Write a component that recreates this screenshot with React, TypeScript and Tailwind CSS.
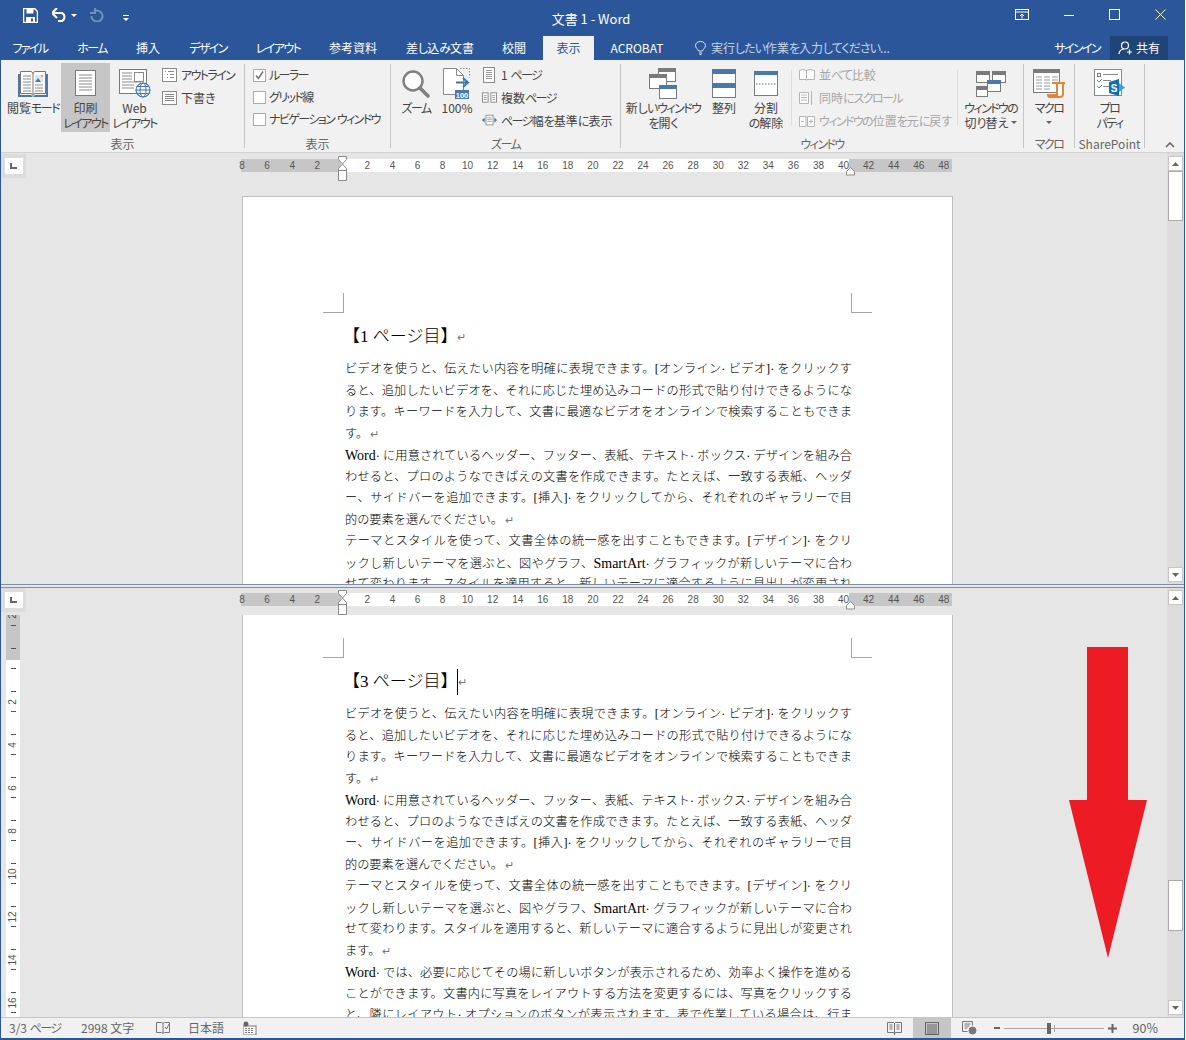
import type { ReactNode } from 'react';

const CHROME_FONT = "font-['Noto_Sans_CJK_JP',sans-serif] [font-feature-settings:'palt'] text-[12px]";
const DOC_FONT = "font-['Liberation_Serif','Noto_Sans_CJK_JP',serif]";

const tabs = [
  { label: 'ファイル', w: 'w-[58px]' },
  { label: 'ホーム', w: 'w-[66px]' },
  { label: '挿入', w: 'w-[46px]' },
  { label: 'デザイン', w: 'w-[74px]' },
  { label: 'レイアウト', w: 'w-[66px]' },
  { label: '参考資料', w: 'w-[84px]' },
  { label: '差し込み文書', w: 'w-[90px]' },
  { label: '校閲', w: 'w-[58px]' },
];

const line = (text: string, mark = false) => ({ text, mark });

const paragraphs = [
  line('ビデオを使うと、伝えたい内容を明確に表現できます。[オンライン· ビデオ]· をクリックす'),
  line('ると、追加したいビデオを、それに応じた埋め込みコードの形式で貼り付けできるようにな'),
  line('ります。キーワードを入力して、文書に最適なビデオをオンラインで検索することもできま'),
  line('す。', true),
  line('Word· に用意されているヘッダー、フッター、表紙、テキスト· ボックス· デザインを組み合'),
  line('わせると、プロのようなできばえの文書を作成できます。たとえば、一致する表紙、ヘッダ'),
  line('ー、サイドバーを追加できます。[挿入]· をクリックしてから、それぞれのギャラリーで目'),
  line('的の要素を選んでください。', true),
  line('テーマとスタイルを使って、文書全体の統一感を出すこともできます。[デザイン]· をクリ'),
  line('ックし新しいテーマを選ぶと、図やグラフ、SmartArt· グラフィックが新しいテーマに合わ'),
  line('せて変わります。スタイルを適用すると、新しいテーマに適合するように見出しが変更され'),
  line('ます。', true),
  line('Word· では、必要に応じてその場に新しいボタンが表示されるため、効率よく操作を進める'),
  line('ことができます。文書内に写真をレイアウトする方法を変更するには、写真をクリックする'),
  line('と、隣にレイアウト· オプションのボタンが表示されます。表で作業している場合は、行ま'),
];

const rulerNumbers = [8, 6, 4, 2, 0, 2, 4, 6, 8, 10, 12, 14, 16, 18, 20, 22, 24, 26, 28, 30, 32, 34, 36, 38, 40, 42, 44, 46, 48];
const verticalNumbers = [2, 0, 2, 4, 6, 8, 10, 12, 14, 16];

// Meiryo UI has narrow kana, so squeeze kana runs and leave kanji at full width
function Jp({ children }: { children: string }) {
  const parts = children.split(/([ァ-ヶー]+|[ぁ-ん]+)/);
  return (
    <>
      {parts.map((p, i) => {
        if (!p) return null;
        if (/^[ァ-ヶー]/.test(p)) return <span key={i} className="tracking-[-1.6px]">{p}</span>;
        if (/^[ぁ-ん]/.test(p)) return <span key={i} className="tracking-[-1px]">{p}</span>;
        return <span key={i}>{p}</span>;
      })}
    </>
  );
}

// Latin words in the body text run larger than the Japanese around them
function DocText({ children }: { children: string }) {
  return (
    <>
      {children.split(/([A-Za-z]+)/).map((p, i) =>
        /^[A-Za-z]/.test(p) ? <span key={i} className="text-[14px]">{p}</span> : <span key={i}>{p}</span>
      )}
    </>
  );
}

function BookIcon() {
  return (
    <svg width="32" height="28" viewBox="0 0 32 28" fill="none">
      <path d="M1 4h2v21h11l2 2 2-2h11V4h2v23H1z" fill="#4a78ad" />
      <path d="M3.5 1.5h11l1.5 2 1.5-2h11v22h-11l-1.5 2-1.5-2h-11z" fill="#fff" stroke="#777" />
      <path d="M16 3v22" stroke="#777" />
      <path d="M6 6h8M6 9h8M6 12h8M6 15h8M6 18h8M6 21h8M18 15h8M18 18h8M18 21h8" stroke="#8a8a8a" />
      <rect x="18" y="5" width="8" height="7" fill="#dfe7f1" />
      <path d="M18 12l3-4 3 4z" fill="#4a78ad" />
      <rect x="24" y="5" width="2" height="2" fill="#e8a05a" />
    </svg>
  );
}

function PageIcon() {
  return (
    <svg width="22" height="27" viewBox="0 0 22 27" fill="none">
      <rect x="0.5" y="0.5" width="20" height="25" fill="#fff" stroke="#7a7a7a" />
      <path d="M4 5h13M4 8h13M4 11h13M4 14h13M4 17h13M4 20h13" stroke="#8a8a8a" />
    </svg>
  );
}

function WebIcon() {
  return (
    <svg width="32" height="29" viewBox="0 0 32 29" fill="none">
      <rect x="0.5" y="0.5" width="27" height="24" fill="#fff" stroke="#7a7a7a" />
      <rect x="15.5" y="3.5" width="9" height="9" stroke="#8a8a8a" />
      <path d="M3 4h10M3 7h10M3 10h10M3 13h19M3 16h12M3 19h12" stroke="#8a8a8a" />
      <circle cx="24" cy="21" r="7" fill="#fff" stroke="#3f75ae" strokeWidth="1.2" />
      <ellipse cx="24" cy="21" rx="3" ry="7" stroke="#3f75ae" />
      <path d="M17 21h14M18 17.5h12M18 24.5h12" stroke="#3f75ae" />
    </svg>
  );
}

function OutlineIcon() {
  return (
    <svg width="15" height="14" viewBox="0 0 15 14" fill="none">
      <rect x="0.5" y="0.5" width="14" height="13" fill="#fff" stroke="#8a8a8a" />
      <path d="M3 3.5h1M6 3.5h6M5 6.5h1M8 6.5h4M5 9.5h1M8 9.5h4" stroke="#8a8a8a" />
    </svg>
  );
}

function DraftIcon() {
  return (
    <svg width="15" height="14" viewBox="0 0 15 14" fill="none">
      <rect x="0.5" y="0.5" width="14" height="13" fill="#fff" stroke="#8a8a8a" />
      <path d="M3 3.5h9M3 5.5h9M3 7.5h9M3 9.5h9" stroke="#8a8a8a" />
    </svg>
  );
}

function CheckBox({ checked }: { checked?: boolean }) {
  return (
    <span className="flex h-[13px] w-[13px] items-center justify-center border border-[#ababab] bg-white">
      {checked && (
        <svg width="11" height="11" viewBox="0 0 11 11" fill="none">
          <path d="M2 5.5l2.5 3L9 1.5" stroke="#777" strokeWidth="1.6" />
        </svg>
      )}
    </span>
  );
}

function ZoomIcon() {
  return (
    <svg width="30" height="30" viewBox="0 0 30 30" fill="none">
      <circle cx="12" cy="12" r="9.5" fill="#fff" stroke="#7f7f7f" strokeWidth="2.4" />
      <path d="M19 19l8 8" stroke="#7f7f7f" strokeWidth="3.6" strokeLinecap="round" />
    </svg>
  );
}

function HundredIcon() {
  return (
    <svg width="28" height="32" viewBox="0 0 28 32" fill="none">
      <path d="M.5.5h13l7 7v19H.5z" fill="#fff" stroke="#8a8a8a" />
      <path d="M13.5.5v7h7" stroke="#8a8a8a" />
      <path d="M17 .5h9.5v9" stroke="#8a8a8a" strokeDasharray="1.5 1.5" />
      <path d="M13 14.5h11M20 10l5 4.5-5 4.5" stroke="#3f75ae" strokeWidth="2" />
      <rect x="12" y="22" width="14" height="9" fill="#4a78ad" />
      <text x="19" y="29.5" textAnchor="middle" fontSize="7.5" fontWeight="700" fill="#fff" fontFamily="Liberation Sans">100</text>
    </svg>
  );
}

function OnePageIcon() {
  return (
    <svg width="13" height="16" viewBox="0 0 13 16" fill="none">
      <rect x="0.5" y="0.5" width="11" height="15" fill="#fff" stroke="#8a8a8a" />
      <path d="M3 3.5h6M3 5.5h6M3 7.5h6M3 9.5h6M3 11.5h6" stroke="#9a9a9a" />
    </svg>
  );
}

function MultiPageIcon() {
  return (
    <svg width="16" height="11" viewBox="0 0 16 11" fill="none">
      <rect x="0.5" y="0.5" width="6" height="10" fill="#fff" stroke="#8a8a8a" />
      <rect x="9.5" y="0.5" width="6" height="10" fill="#fff" stroke="#8a8a8a" />
      <path d="M2 3.5h3M2 5.5h3M2 7.5h3M11 3.5h3M11 5.5h3M11 7.5h3" stroke="#9a9a9a" />
    </svg>
  );
}

function PageWidthIcon() {
  return (
    <svg width="17" height="13" viewBox="0 0 17 13" fill="none">
      <rect x="4.5" y="0.5" width="8" height="11" fill="#fff" stroke="#8a8a8a" />
      <path d="M6 3.5h5M6 5.5h5M6 7.5h5" stroke="#9a9a9a" />
      <path d="M0 6l3-3v6zM17 6l-3-3v6z" fill="#3f75ae" />
    </svg>
  );
}

function WinBox({ x, y, w, h, bar = '#7a7a7a' }: { x: number; y: number; w: number; h: number; bar?: string }) {
  return (
    <g>
      <rect x={x + 0.5} y={y + 0.5} width={w} height={h} fill="#fff" stroke="#7a7a7a" />
      <rect x={x} y={y} width={w + 1} height={4} fill={bar} />
    </g>
  );
}

function NewWindowIcon() {
  return (
    <svg width="28" height="31" viewBox="0 0 28 31" fill="none">
      <WinBox x={9} y={0} w={17} h={13} />
      <WinBox x={0} y={6} w={17} h={14} />
      <WinBox x={10} y={17} w={17} h={13} bar="#4a78ad" />
    </svg>
  );
}

function ArrangeIcon() {
  return (
    <svg width="24" height="29" viewBox="0 0 24 29" fill="none">
      <rect x="0.5" y="0.5" width="23" height="28" fill="#fff" stroke="#7a7a7a" />
      <rect x="0" y="0" width="24" height="5" fill="#4a78ad" />
      <rect x="0" y="14" width="24" height="5" fill="#4a78ad" />
    </svg>
  );
}

function SplitIcon() {
  return (
    <svg width="24" height="25" viewBox="0 0 24 25" fill="none">
      <rect x="0.5" y="0.5" width="23" height="24" fill="#fff" stroke="#7a7a7a" />
      <rect x="0" y="0" width="24" height="4" fill="#4a78ad" />
      <path d="M2 13h20" stroke="#4a78ad" strokeDasharray="1.5 1.5" />
    </svg>
  );
}

function CompareIcon({ variant }: { variant: number }) {
  return (
    <svg width="16" height="14" viewBox="0 0 16 14" fill="none" stroke="#b5b5b5">
      {variant === 0 && <path d="M.5 2.5l3-1 4 1 4-1 4 1v9h-7.500l-.5 1-.5-1H.5zM7.500 2.500v9" fill="#fff" />}
      {variant === 1 && (
        <>
          <path d="M.5 1.500h9v11h-9z" fill="#fff" />
          <path d="M2 4h6M2 6.500h6M2 9h6M12.500 0v14" />
        </>
      )}
      {variant === 2 && (
        <>
          <path d="M.5 2.500h6.500v10H.5zM8.500 2.500H15.500v10H8.500z" fill="#fff" />
          <path d="M2 7.500h3M10 7.500h4M12 5.500v4" />
        </>
      )}
    </svg>
  );
}

function SwitchIcon() {
  return (
    <svg width="30" height="26" viewBox="0 0 30 26" fill="none">
      <WinBox x={0} y={0} w={13} h={11} />
      <WinBox x={16} y={0} w={13} h={11} />
      <WinBox x={0} y={15} w={11} h={10} />
      <WinBox x={11} y={9} w={13} h={11} bar="#4a78ad" />
    </svg>
  );
}

function MacroIcon() {
  return (
    <svg width="32" height="29" viewBox="0 0 32 29" fill="none">
      <rect x="0.5" y="0.5" width="26" height="23" fill="#fff" stroke="#7a7a7a" />
      <rect x="0" y="0" width="27" height="4" fill="#7a7a7a" />
      <path d="M3 8h6M11 8h6M19 8h6M3 11h6M11 11h6M19 11h6M3 14h6M11 14h6M3 17h6M11 17h6M3 20h6M11 20h6" stroke="#9a9a9a" />
      <path d="M19 14h13l-2 1v10c0 2-1 3-3 3H17c-1.500 0-2-1-2-2h9V16c0-1 .5-2 1-2z" fill="#fff" stroke="#e0883a" strokeWidth="2" />
    </svg>
  );
}

function PropertyIcon() {
  return (
    <svg width="31" height="29" viewBox="0 0 31 29" fill="none">
      <rect x="0.5" y="0.5" width="27" height="26" fill="#fff" stroke="#8a8a8a" />
      <rect x="3.500" y="4.500" width="3" height="3" stroke="#777" />
      <path d="M9 5.500h15M9 11.500h8M9 17.500h8" stroke="#8a8a8a" />
      <path d="M3 11l2 2 3-3M3 17l2 2 3-3" stroke="#5c7fa8" />
      <path d="M15 13l10-3v17l-10-3z" fill="#0f6fb5" />
      <path d="M25 14l6 4.500-6 4.500z" fill="#38a3dc" />
      <text x="20" y="23" textAnchor="middle" fontSize="10" fontWeight="700" fill="#fff" fontFamily="Liberation Sans">S</text>
    </svg>
  );
}

function Caret({ className = '' }: { className?: string }) {
  return (
    <svg className={className} width="6" height="3" viewBox="0 0 6 3">
      <path d="M0 0h6L3 3z" fill="#666" />
    </svg>
  );
}

function BigButton({ icon, lines, width, active, caret }: { icon: ReactNode; lines: string[]; width: string; active?: boolean; caret?: 'inline' | 'below' }) {
  return (
    <div className={`flex h-[69px] flex-col items-center text-center leading-[15px] text-[#444] ${width} ${active ? 'bg-[#c6c6c6]' : ''}`}>
      <div className="flex h-[37px] shrink-0 items-center justify-center pt-[4px]">{icon}</div>
      {lines.map((l, i) => (
        <div key={l} className="flex items-center whitespace-nowrap">
          <Jp>{l}</Jp>
          {caret === 'inline' && i === lines.length - 1 && <Caret className="ml-[4px]" />}
        </div>
      ))}
      {caret === 'below' && <Caret className="mt-[6px]" />}
    </div>
  );
}

function SmallItem({ icon, label, disabled, iconWidth = 'w-[15px]' }: { icon: ReactNode; label: string; disabled?: boolean; iconWidth?: string }) {
  return (
    <div className={`flex h-[23px] items-center gap-[4px] whitespace-nowrap ${disabled ? 'text-[#a6a6a6]' : 'text-[#444]'}`}>
      <span className={`flex justify-center ${iconWidth}`}>{icon}</span>
      <span><Jp>{label}</Jp></span>
    </div>
  );
}

function CheckItem({ label, checked }: { label: string; checked?: boolean }) {
  return (
    <div className="flex h-[22px] items-center gap-[3px] whitespace-nowrap">
      <CheckBox checked={checked} />
      <span><Jp>{label}</Jp></span>
    </div>
  );
}

function Group({ width, label, children }: { width: string; label: string; children: ReactNode }) {
  return (
    <div className={`mt-[4px] flex h-[84px] shrink-0 flex-col border-r border-[#c6c6c6] ${width}`}>
      <div className="mt-[-1px] flex h-[73px] shrink-0">{children}</div>
      <div className="h-4 whitespace-nowrap text-center leading-4 text-[#666]"><Jp>{label}</Jp></div>
    </div>
  );
}

function Ribbon() {
  return (
    <div className={`flex h-[93px] shrink-0 border-b border-[#d2d2d2] bg-[#f1f1f1] ${CHROME_FONT}`}>
      <Group width="w-[244px]" label="表示">
        <div className="flex pl-[4px]">
          <BigButton width="w-[56px]" icon={<BookIcon />} lines={['閲覧モード']} />
          <BigButton width="w-[49px]" active icon={<PageIcon />} lines={['印刷', 'レイアウト']} />
          <BigButton width="w-[49px]" icon={<WebIcon />} lines={['Web', 'レイアウト']} />
          <div className="ml-[3px] flex flex-col">
            <SmallItem icon={<OutlineIcon />} label="アウトライン" />
            <SmallItem icon={<DraftIcon />} label="下書き" />
          </div>
        </div>
      </Group>
      <Group width="w-[146px]" label="表示">
        <div className="flex flex-col pl-[8px] pt-[1px] text-[#444]">
          <CheckItem checked label="ルーラー" />
          <CheckItem label="グリッド線" />
          <CheckItem label="ナビゲーション ウィンドウ" />
        </div>
      </Group>
      <Group width="w-[230px]" label="ズーム">
        <div className="flex pl-[5px]">
          <BigButton width="w-[40px]" icon={<ZoomIcon />} lines={['ズーム']} />
          <BigButton width="w-[42px]" icon={<HundredIcon />} lines={['100%']} />
          <div className="ml-[4px] flex flex-col">
            <SmallItem iconWidth="w-[15px]" icon={<OnePageIcon />} label="1 ページ" />
            <SmallItem iconWidth="w-[15px]" icon={<MultiPageIcon />} label="複数ページ" />
            <SmallItem iconWidth="w-[15px]" icon={<PageWidthIcon />} label="ページ幅を基準に表示" />
          </div>
        </div>
      </Group>
      <Group width="w-[403px]" label="ウィンドウ">
        <div className="flex pl-[2px]">
          <BigButton width="w-[80px]" icon={<NewWindowIcon />} lines={['新しいウィンドウ', 'を開く']} />
          <BigButton width="w-[42px]" icon={<ArrangeIcon />} lines={['整列']} />
          <BigButton width="w-[42px]" icon={<SplitIcon />} lines={['分割', 'の解除']} />
          <div className="ml-[4px] mt-[6px] h-[56px] w-px bg-[#dcdcdc]" />
          <div className="ml-[7px] flex w-[158px] flex-col">
            <SmallItem iconWidth="w-[16px]" disabled icon={<CompareIcon variant={0} />} label="並べて比較" />
            <SmallItem iconWidth="w-[16px]" disabled icon={<CompareIcon variant={1} />} label="同時にスクロール" />
            <SmallItem iconWidth="w-[16px]" disabled icon={<CompareIcon variant={2} />} label="ウィンドウの位置を元に戻す" />
          </div>
          <div className="mt-[6px] h-[56px] w-px bg-[#dcdcdc]" />
          <BigButton width="w-[66px]" caret="inline" icon={<SwitchIcon />} lines={['ウィンドウの', '切り替え']} />
        </div>
      </Group>
      <Group width="w-[51px]" label="マクロ">
        <BigButton width="w-[50px]" caret="below" icon={<MacroIcon />} lines={['マクロ']} />
      </Group>
      <Group width="w-[70px]" label="SharePoint">
        <BigButton width="w-[69px]" icon={<PropertyIcon />} lines={['プロ', 'パティ']} />
      </Group>
      <div className="flex flex-1 items-end justify-end pb-[4px] pr-[9px]">
        <svg width="10" height="6" viewBox="0 0 10 6" fill="none">
          <path d="M1 5l4-4 4 4" stroke="#666" strokeWidth="1.600" />
        </svg>
      </div>
    </div>
  );
}

function TitleBar() {
  return (
    <div className="grid h-[36px] shrink-0 grid-cols-[1fr_auto_1fr] bg-[#2b579a] text-white">
      <div className="flex items-start pl-[22px] pt-[8px]">
        <svg width="15" height="15" viewBox="0 0 15 15" fill="none">
          <path d="M.5.5h11l3 3v11H.5z" stroke="#fff" strokeWidth="1.500" />
          <rect x="3.500" y="1" width="7" height="4.500" fill="#fff" />
          <rect x="3" y="9" width="9" height="5.500" fill="#fff" />
          <rect x="8" y="10.500" width="2" height="3" fill="#2b579a" />
        </svg>
        <svg className="ml-[14px]" width="16" height="14" viewBox="0 0 16 14" fill="none">
          <path d="M1 5h9a4.500 4.500 0 0 1 0 8H6" stroke="#fff" strokeWidth="2" />
          <path d="M5 0L0 5l5 5" stroke="#fff" strokeWidth="2" />
        </svg>
        <svg className="ml-[3px] mt-[6px]" width="6" height="4" viewBox="0 0 6 4"><path d="M0 0h6L3 3z" fill="#fff" /></svg>
        <svg className="ml-[12px]" width="15" height="14" viewBox="0 0 15 14" fill="none">
          <path d="M5 3.500a5.500 5.500 0 1 1-2.500 4.500" stroke="#6f8fbd" strokeWidth="2" />
          <path d="M6 0v5H1" stroke="#6f8fbd" strokeWidth="2" />
        </svg>
        <svg className="ml-[19px] mt-[7px]" width="6" height="6" viewBox="0 0 6 6" fill="none">
          <path d="M0 .5h6" stroke="#fff" />
          <path d="M0 3h6L3 6z" fill="#fff" />
        </svg>
      </div>
      <div className={`mr-[3px] pt-[10px] leading-[18px] ${CHROME_FONT} text-[13px]`}>文書 1 - Word</div>
      <div className="flex items-start justify-end pr-[18px] pt-[9px]">
        <svg width="14" height="12" viewBox="0 0 14 12" fill="none" stroke="#fff">
          <rect x="0.500" y="0.500" width="13" height="10" />
          <path d="M.5 3h13M7 9.500V5M5 7l2-2 2 2" />
        </svg>
        <svg className="ml-[34px]" width="12" height="12" viewBox="0 0 12 12" fill="none" stroke="#fff"><path d="M1 6.500h10" /></svg>
        <svg className="ml-[34px]" width="11" height="11" viewBox="0 0 11 11" fill="none" stroke="#fff"><rect x="0.500" y="0.500" width="10" height="10" /></svg>
        <svg className="ml-[35px]" width="11" height="11" viewBox="0 0 11 11" fill="none" stroke="#fff"><path d="M.5.5l10 10M10.500.5l-10 10" /></svg>
      </div>
    </div>
  );
}

function TabRow() {
  return (
    <div className={`flex h-[24px] shrink-0 items-stretch bg-[#2b579a] text-white ${CHROME_FONT}`}>
      {tabs.map((t) => (
        <div key={t.label} className={`flex items-center justify-center whitespace-nowrap ${t.w}`}><Jp>{t.label}</Jp></div>
      ))}
      <div className="flex w-[51px] items-center justify-center bg-[#f1f1f1] text-[#2b579a]">表示</div>
      <div className="flex w-[86px] items-center justify-center">ACROBAT</div>
      <div className="ml-[15px] flex items-center gap-[5px] text-[#c5d3e8]">
        <svg width="11" height="14" viewBox="0 0 11 14" fill="none" stroke="#dfe7f2">
          <path d="M3.500 10C3 8 .5 7 .5 4.500a5 4 0 0 1 10 0C10.500 7 8 8 7.500 10z" />
          <path d="M4 12h3M4.500 13.500h2" />
        </svg>
        <span><Jp>実行したい作業を入力してください...</Jp></span>
      </div>
      <div className="flex flex-1 items-center justify-end"><Jp>サインイン</Jp></div>
      <div className="ml-[10px] mr-[16px] flex w-[58px] items-center justify-center gap-[3px] self-stretch bg-[#1f4478]">
        <svg width="15" height="14" viewBox="0 0 15 14" fill="none" stroke="#fff" strokeWidth="1.200">
          <circle cx="7" cy="4.500" r="3.500" />
          <path d="M1 13c0-3 2.500-5 5-5M9 11h5M11.500 8.500v5" />
        </svg>
        <span>共有</span>
      </div>
    </div>
  );
}

function HorizontalRuler() {
  return (
    <div className="relative h-[13px] w-[711px] bg-[linear-gradient(90deg,#c6c6c6_100px,#ffffff_100px,#ffffff_608px,#c6c6c6_608px)] font-['Liberation_Sans',sans-serif] text-[10px] leading-[13px] text-[#555]">
      <div className="ml-[-11.500px] flex w-[740px]">
        {rulerNumbers.map((n, i) => (
          <span key={i} className="w-[25.070px] shrink-0 text-center">{n === 0 ? '' : n}</span>
        ))}
      </div>
      {/* indent markers sit on top of the numbers */}
      <svg className="absolute left-[97px] top-[-3px]" width="10" height="25" viewBox="0 0 10 25" fill="none">
        <path d="M.5.500h8v3L4.500 8l-4-4.500zM4.500 8l4 4.500v2h-8v-2zM.5 14.500h8v10h-8z" fill="#fff" stroke="#8a8a8a" />
      </svg>
      <svg className="absolute left-[605px] top-[8px]" width="10" height="9" viewBox="0 0 10 9" fill="none">
        <path d="M4.500.5l4 4v3.500h-8V4.500z" fill="#fff" stroke="#8a8a8a" />
      </svg>
    </div>
  );
}

function VerticalRuler() {
  return (
    <div className="ml-[5px] flex h-full w-[14px] shrink-0 flex-col items-center overflow-hidden bg-[linear-gradient(#c6c6c6_45px,#ffffff_45px)] font-['Liberation_Sans',sans-serif] text-[10px] text-[#555]">
      <div className="mt-[-21px] flex flex-col items-center">
        {verticalNumbers.map((n, i) => (
          <div key={i} className="flex h-[43px] w-[14px] shrink-0 flex-col items-center justify-between py-[11px]">
            <span className="h-px w-[5px] bg-[#555]" />
            <span className="-rotate-90 leading-none">{n === 0 ? '' : n}</span>
            <span className="h-px w-[5px] bg-[#555]" />
          </div>
        ))}
      </div>
    </div>
  );
}

function Page({ page, cursor, topBorder, lineCount }: { page: number; cursor?: boolean; topBorder?: boolean; lineCount: number }) {
  return (
    <div className={`h-full w-[711px] shrink-0 overflow-hidden border-x border-[#bfbfbf] bg-white text-black ${DOC_FONT} ${topBorder ? 'border-t pt-[96px]' : 'pt-[23px]'}`}>
      <div className="ml-[80px] flex w-[549px] justify-between">
        <div className="h-[20px] w-[21px] border-b border-r border-[#a6a6a6]" />
        <div className="h-[20px] w-[21px] border-b border-l border-[#a6a6a6]" />
      </div>
      <div className="ml-[102px] mt-[11px] flex h-[26px] items-center text-[17px] font-light">
        <span className="ml-[-2px]">【{page} ページ目】</span>
        {cursor && <span className="h-[26px] w-px bg-black" />}
        <span className="text-[11px] text-[#777]">↵</span>
      </div>
      <div className="ml-[102px] mt-[9px] w-[507px] text-[12.200px] font-light leading-[21.500px]">
        {paragraphs.slice(0, lineCount).map((p) => (
          <div key={p.text} className={`h-[21.500px] whitespace-nowrap ${p.mark ? '' : '[text-align-last:justify]'}`}>
            <DocText>{p.text}</DocText>
            {p.mark && <span className="ml-[2px] text-[11px] text-[#777]">↵</span>}
          </div>
        ))}
      </div>
    </div>
  );
}

function ScrollButton({ down }: { down?: boolean }) {
  return (
    <div className="flex h-[15px] w-[15px] shrink-0 items-center justify-center border border-[#c6c6c6] bg-white">
      <svg width="7" height="4" viewBox="0 0 7 4">
        <path d={down ? 'M0 0h7L3.500 4z' : 'M0 4h7L3.500 0z'} fill="#666" />
      </svg>
    </div>
  );
}

function Corner({ top }: { top: string }) {
  return (
    <div className={`flex h-[24px] w-[25px] shrink-0 items-center justify-center bg-[#dcdcdc] ${top}`}>
      <div className="flex h-[16px] w-[18px] items-center justify-center bg-white">
        <svg width="7" height="6" viewBox="0 0 7 6"><path d="M0 0h2v4h5v2H0z" fill="#666" /></svg>
      </div>
    </div>
  );
}

function StatusBar() {
  return (
    <div className={`flex h-[21px] shrink-0 items-center border-t border-[#c6c6c6] bg-[#f1f1f1] text-[#666] ${CHROME_FONT}`}>
      <span className="ml-[8px] w-[72px]"><Jp>3/3 ページ</Jp></span>
      <span className="w-[75px]">2998 文字</span>
      <svg width="14" height="14" viewBox="0 0 14 14" fill="none" stroke="#777">
        <path d="M.5 1.500h5l1.500 1 1.500-1h5v10h-5L7 12.500l-1.500-1h-5zM7 2.500v10M9 6l1.500 2L13 3" />
      </svg>
      <span className="ml-[18px] w-[36px]">日本語</span>
      <svg className="ml-[19px]" width="14" height="14" viewBox="0 0 14 14" fill="none">
        <rect x="0" y="5" width="13" height="9" fill="#fff" stroke="#777" />
        <path d="M2 7.500h9M2 9.500h9M2 11.500h9" stroke="#777" strokeDasharray="2 1" />
        <circle cx="3" cy="3" r="2.500" fill="#666" />
      </svg>
      <div className="flex-1" />
      <svg width="15" height="14" viewBox="0 0 15 14" fill="none" stroke="#777">
        <path d="M.5 1.500h6l1 1 1-1h6v10h-6l-1 1.500-1-1.500h-6zM7.500 2v12M2.500 4h3M2.500 6h3M2.500 8h3M9.500 4h3M9.500 6h3M9.500 8h3" />
      </svg>
      <div className="ml-[11px] flex h-full w-[38px] items-center justify-center bg-[#c6c6c6]">
        <svg width="14" height="13" viewBox="0 0 14 13" fill="none" stroke="#666">
          <rect x="0.500" y="0.500" width="13" height="12" />
          <path d="M2 3h10M2 5h10M2 7h10M2 9h10M2 11h10" />
        </svg>
      </div>
      <svg className="ml-[11px]" width="15" height="14" viewBox="0 0 15 14" fill="none" stroke="#777">
        <path d="M.5.5h10v4M.5.5v10h5M2.500 3h6M2.500 5h5M2.500 7h3" />
        <circle cx="10.500" cy="9.500" r="3.500" fill="#777" />
      </svg>
      <div className="ml-[17px] h-[2px] w-[6px] bg-[#666]" />
      <div className="relative ml-[4px] h-px w-[100px] bg-[#a6a6a6]">
        <div className="absolute left-[43px] top-[-5px] h-[11px] w-[4px] bg-[#666]" />
        <div className="absolute left-[50px] top-[-3px] h-[7px] w-px bg-[#a6a6a6]" />
      </div>
      <svg className="ml-[4px]" width="9" height="9" viewBox="0 0 9 9"><path d="M3.500 0h2v3.500H9v2H5.500V9h-2V5.500H0v-2h3.500z" fill="#666" /></svg>
      <span className="ml-[16px] mr-[26px] text-[12.500px]">90%</span>
    </div>
  );
}

export default function App() {
  return (
    <div className="w-[1186px] bg-white">
      <div className="relative flex h-[1040px] w-[1185px] flex-col overflow-hidden border-x border-b-2 border-[#2b579a]">
        <TitleBar />
        <TabRow />
        <Ribbon />

        {/* upper pane */}
        <div className="flex h-[431px] shrink-0 bg-[#e6e6e6]">
          <div className="min-w-0 flex-1 overflow-hidden">
            <div className="flex h-[43px]">
              <Corner top="mt-[1px]" />
              <div className="ml-[215px] mt-[6px]"><HorizontalRuler /></div>
            </div>
            <div className="ml-[241px] h-[388px]"><Page page={1} topBorder lineCount={11} /></div>
          </div>
          <div className="flex w-[17px] shrink-0 flex-col bg-[#dcdcdc] pb-[2px] pl-px pt-[3px]">
            <ScrollButton />
            <div className="h-[50px] w-[15px] shrink-0 border border-[#ababab] bg-white" />
            <div className="flex-1" />
            <ScrollButton down />
          </div>
        </div>

        {/* splitter */}
        <div className="h-[4px] shrink-0 border-y border-[#7f8fa9] bg-[#e6e6e6]" />

        {/* lower pane */}
        <div className="flex h-[429px] shrink-0 bg-[#e6e6e6]">
          <div className="min-w-0 flex-1 overflow-hidden">
            <div className="flex h-[27px]">
              <Corner top="" />
              <div className="ml-[215px] mt-[5px]"><HorizontalRuler /></div>
            </div>
            <div className="flex h-[402px]">
              <VerticalRuler />
              <div className="ml-[222px] h-full"><Page page={3} cursor lineCount={15} /></div>
            </div>
          </div>
          <div className="flex w-[17px] shrink-0 flex-col bg-[#dcdcdc] pb-[2px] pl-px pt-[2px]">
            <ScrollButton />
            <div className="h-[275px] shrink-0" />
            <div className="h-[51px] w-[15px] shrink-0 border border-[#ababab] bg-white" />
            <div className="flex-1" />
            <ScrollButton down />
          </div>
        </div>

        <StatusBar />

        {/* annotation arrow drawn over the window */}
        <svg className="absolute left-[1067px] top-[646px]" width="80" height="313" viewBox="0 0 80 313">
          <path d="M19 1h41v153h19L40 312 1 154h18z" fill="#ed1c24" />
        </svg>
      </div>
    </div>
  );
}
